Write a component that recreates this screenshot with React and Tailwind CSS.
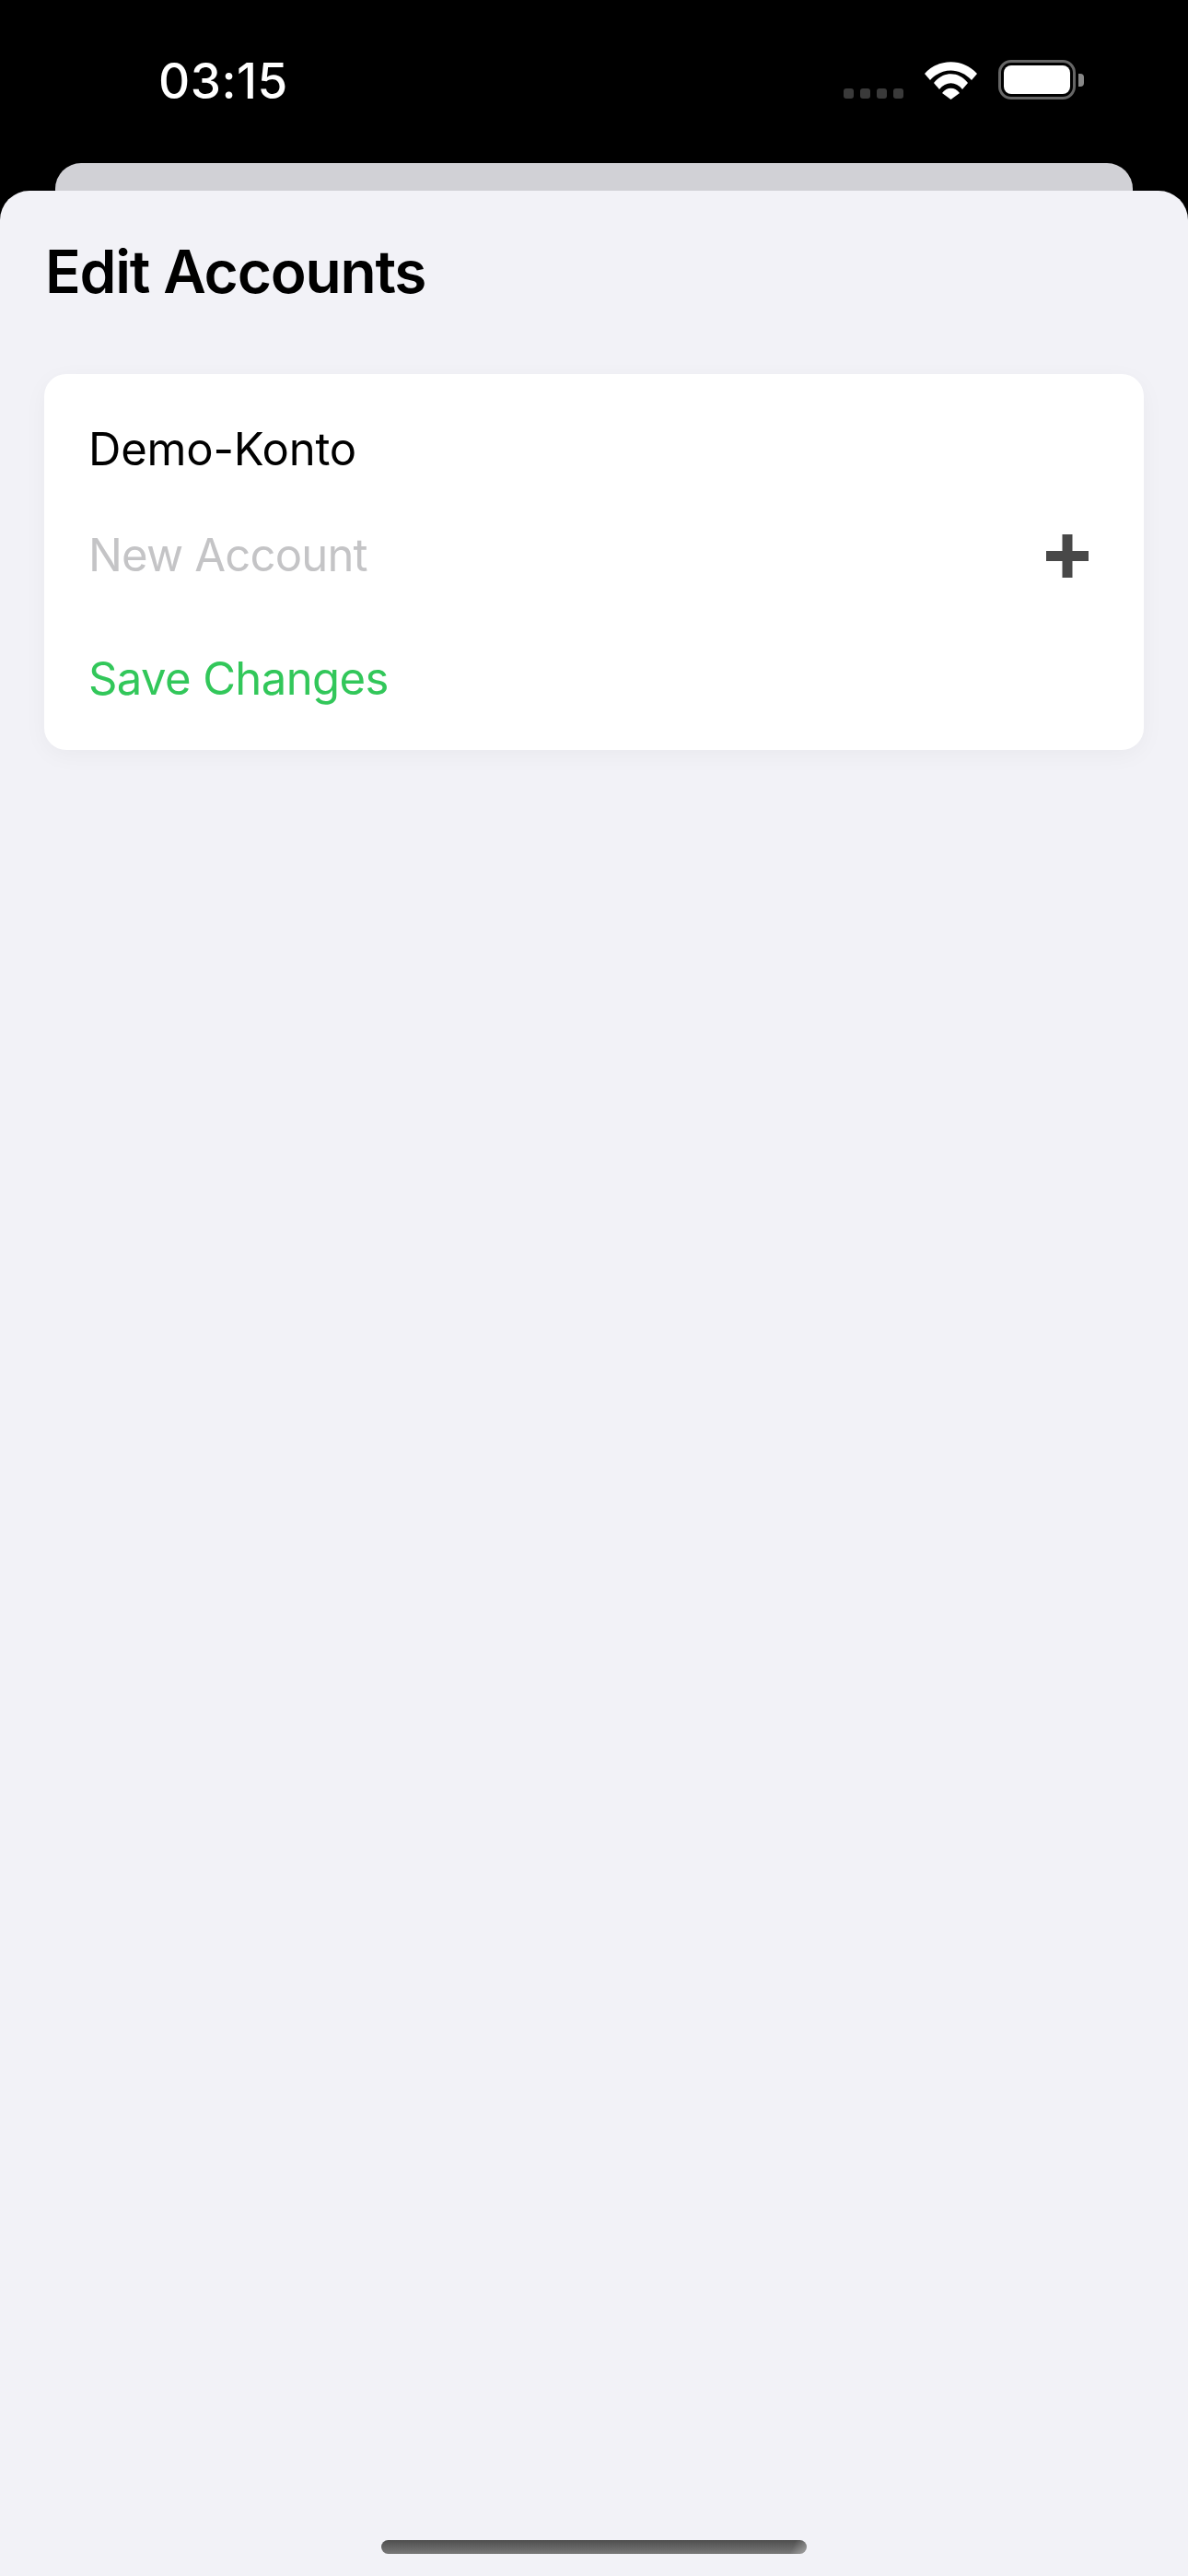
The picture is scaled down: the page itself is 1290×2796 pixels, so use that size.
function WifiIcon() {
    return (
        <svg width="57" height="41" viewBox="0 0 57 41" fill="white">
            <path d="M0 13C15 -4 42 -4 57 13L51 20C38 6 19 6 6 20Z" />
            <path d="M10 23C20 10 37 10 47 23L41 30C34 21 23 21 16 30Z" />
            <path d="M19 34C24 27 33 27 38 34L28.5 41Z" />
        </svg>
    )
}

function PlusIcon() {
    return (
        <svg width="46" height="47" viewBox="0 0 46 47" fill="#484848">
            <path d="M17.5 0H28.5V18H46V29H28.5V47H17.5V29H0V18H17.5Z" />
        </svg>
    )
}

function StatusBar() {
    return (
        <div className="h-[177px] pl-[172px] pr-[113px] flex justify-between items-start">
            <span className="mt-[58px] text-[53px] leading-[60px] font-medium text-white tracking-[0.5px]">03:15</span>
            <div className="mt-[65px] flex items-end">
                <div className="flex gap-[7px] mr-[23px] mb-[1px]">
                    <div className="w-[11px] h-[11px] rounded-[3px] bg-[#3a3a3a]" />
                    <div className="w-[11px] h-[11px] rounded-[3px] bg-[#3a3a3a]" />
                    <div className="w-[11px] h-[11px] rounded-[3px] bg-[#3a3a3a]" />
                    <div className="w-[11px] h-[11px] rounded-[3px] bg-[#3a3a3a]" />
                </div>
                <WifiIcon />
                <div className="ml-[23px] flex items-center">
                    <div className="w-[84px] h-[43px] p-[3px] rounded-[14px] border-[3px] border-[#666666]">
                        <div className="w-full h-full rounded-[8px] bg-white" />
                    </div>
                    <div className="ml-[3px] w-[6px] h-[14px] rounded-r-[4px] bg-[#888888]" />
                </div>
            </div>
        </div>
    )
}

export default function App() {
    return (
        <div className="w-[1290px] h-[2796px] bg-black flex flex-col overflow-hidden font-['Inter',sans-serif]">
            <StatusBar />
            <div className="h-[30px] mx-[60px] rounded-t-[28px] bg-[#d1d1d6]" />
            <div className="flex-1 rounded-t-[32px] bg-[#f2f2f7] flex flex-col">
                <h1 className="mt-[49px] ml-[49px] text-[64px] leading-[78px] font-semibold text-black tracking-[-1.2px]">Edit Accounts</h1>
                <div className="mt-[72px] mx-[48px] h-[408px] rounded-[24px] bg-white shadow-[0_6px_26px_rgba(0,0,0,0.04)] pl-[48px] pr-[60px] flex flex-col text-[49px] leading-[60px]">
                    <span className="mt-[52px] text-black tracking-[-0.2px]">Demo-Konto</span>
                    <div className="mt-[55px] flex items-center justify-between">
                        <span className="text-[#c4c4c6] tracking-[-0.8px]">New Account</span>
                        <PlusIcon />
                    </div>
                    <span className="mt-[74px] text-[#32c75a] tracking-[-0.6px]">Save Changes</span>
                </div>
                <div className="mt-auto mb-[24px] mx-auto w-[462px] h-[15px] rounded-full bg-[linear-gradient(115deg,transparent_96%,rgba(255,255,255,0.35)),linear-gradient(to_bottom,#4e4e4e,#787878)]" />
            </div>
        </div>
    )
}
